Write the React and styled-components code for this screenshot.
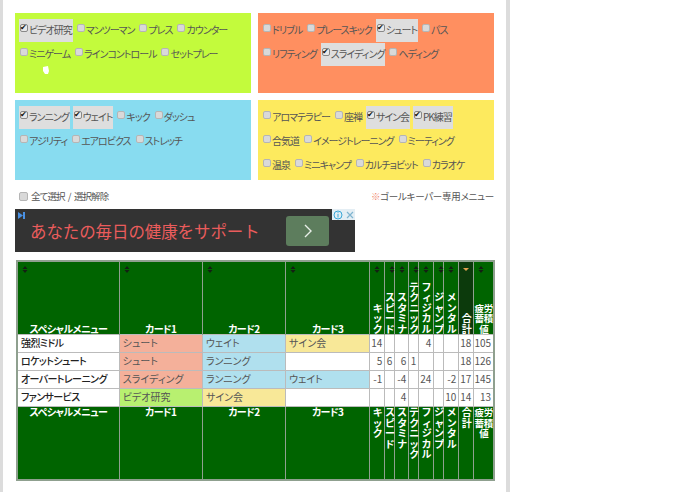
import styled, { createGlobalStyle } from "styled-components";

const GlobalStyle = createGlobalStyle`
  html, body {
    margin: 0;
    background: #fff;
    font-family: "Noto Sans CJK JP", "Liberation Sans", sans-serif;
    font-feature-settings: "palt";
    color: #444;
  }
`;

const Page = styled.div`
  box-sizing: border-box;
  width: 510px;
  height: 492px;
  overflow: hidden;
  position: relative;
  border-left: 3px solid #dcdcdc;
  border-right: 4px solid #dcdcdc;
  padding: 13px 12px 0 12px;
`;

const Panels = styled.div`
  display: grid;
  grid-template-columns: 236px 236px;
  grid-auto-rows: 80px;
  gap: 7px;
`;

const Panel = styled.div`
  background: ${(p) => p.$bg};
  padding: 6px 4px 0;
`;

const ItemRow = styled.div`
  display: flex;
  margin-bottom: 1px;
`;

const Item = styled.label`
  box-sizing: border-box;
  display: flex;
  align-items: center;
  height: 23px;
  margin-right: 3px;
  padding: 0 1px 2px;
  font-size: 10px;
  letter-spacing: -1px;
  color: #555;
  white-space: nowrap;
  background: ${(p) => (p.$on ? "#dedede" : "transparent")};
`;

const Box = styled.input.attrs({ type: "checkbox", readOnly: true })`
  appearance: none;
  box-sizing: border-box;
  width: 8px;
  height: 8px;
  margin: -3px 1px 0 0;
  background: #d9d9d9;
  border: 1px solid #b5b5b5;
  border-radius: 2px;
  position: relative;
  flex: none;

  &:checked {
    background: #e8e8e8;
    border-color: #888;
  }

  &:checked::after {
    content: "✔";
    position: absolute;
    left: -1px;
    top: -3px;
    font-size: 8px;
    line-height: 11px;
    color: #111;
  }
`;

const Cursor = styled.svg`
  position: absolute;
  left: 39px;
  top: 65px;
`;

const Options = styled.div`
  display: flex;
  justify-content: space-between;
  align-items: center;
  height: 16px;
  margin-top: 8px;
  font-size: 9.5px;
  color: #555;
  padding-left: 4px;
`;

const SelectAll = styled.label`
  display: flex;
  align-items: center;
  gap: 2px;
  letter-spacing: -0.9px;
  word-spacing: 2px;

  input {
    width: 9px;
    height: 9px;
    margin: 0 1px 0 0;
  }
`;

const Keeper = styled.span`
  letter-spacing: -0.25px;

  em {
    font-style: normal;
    color: #f08a70;
  }
`;

const Ad = styled.div`
  position: relative;
  display: flex;
  align-items: center;
  justify-content: space-between;
  box-sizing: border-box;
  width: 340px;
  height: 43px;
  margin-top: 5px;
  padding: 0 26px 0 15px;
  background: #333;
`;

const AdText = styled.span`
  font-size: 16.5px;
  color: #ea5c5c;
  font-feature-settings: normal;
  letter-spacing: -0.1px;
`;

const AdButton = styled.div`
  width: 43px;
  height: 30px;
  border-radius: 3px;
  background: #5d7d5d;
  display: flex;
  align-items: center;
  justify-content: center;
`;

const AdMark = styled.svg`
  position: absolute;
  left: 3px;
  top: 3px;
`;

const AdInfo = styled.div`
  position: absolute;
  right: 0;
  top: 0;
  width: 23px;
  height: 11px;
  background: #e4eef4;
  display: flex;
  align-items: center;
  justify-content: space-around;
`;

const Table = styled.table`
  box-sizing: border-box;
  table-layout: fixed;
  border-collapse: collapse;
  width: 479px;
  margin: 8px 0 0 1px;
  border: 2px solid #8fa08f;
  font-size: 10px;
`;

const HeadCell = styled.th`
  position: relative;
  height: 72px;
  padding: 0;
  background: ${(p) => (p.$active ? "#0c3a0c" : "#006400")};
  color: #fff;
  border-left: 1px solid #8fa08f;
  font-weight: 700;
  font-size: ${(p) => (p.$small ? "9.5px" : "10px")};
  letter-spacing: ${(p) => (p.$small ? "-0.4px" : "-0.6px")};
  line-height: 10.5px;
  text-align: center;
  vertical-align: ${(p) => (p.$foot ? "top" : "bottom")};
  word-break: break-all;
`;

const SortIcon = styled.svg`
  position: absolute;
  left: 4px;
  top: 4px;
`;

const Cell = styled.td`
  height: 16px;
  padding: ${(p) => (p.$num ? "0 2px 1px 0" : "0 2px 1px 3px")};
  border: 1px solid #bbb;
  background: ${(p) => p.$bg || "#fff"};
  text-align: ${(p) => (p.$num ? "right" : "left")};
  white-space: nowrap;
  overflow: hidden;
  color: ${(p) => (p.$name ? "#222" : "#555")};
  font-weight: ${(p) => (p.$name ? 500 : 400)};
  letter-spacing: ${(p) => (p.$name ? "-0.6px" : "0")};
  line-height: 12px;
`;

const pink = "#f4b09a";
const blue = "#b0e0ee";
const yellow = "#f8e898";
const green = "#b8f070";

const panels = [
  {
    bg: "#c3fb3c",
    rows: [
      [["ビデオ研究", true], ["マンツーマン"], ["プレス"], ["カウンター"]],
      [["ミニゲーム"], ["ラインコントロール"], ["セットプレー"]],
    ],
  },
  {
    bg: "#ff8f60",
    rows: [
      [["ドリブル"], ["プレースキック"], ["シュート", true], ["パス"]],
      [["リフティング"], ["スライディング", true], ["ヘディング"]],
    ],
  },
  {
    bg: "#88dcf0",
    rows: [
      [["ランニング", true], ["ウェイト", true], ["キック"], ["ダッシュ"]],
      [["アジリティ"], ["エアロビクス"], ["ストレッチ"]],
    ],
  },
  {
    bg: "#fdea5e",
    rows: [
      [["アロマテラピー"], ["座禅"], ["サイン会", true], ["PK練習", true]],
      [["合気道"], ["イメージトレーニング"], ["ミーティング"]],
      [["温泉"], ["ミニキャンプ"], ["カルチョビット"], ["カラオケ"]],
    ],
  },
];

const columns = [
  ["スペシャルメニュー", 102], ["カード1", 83], ["カード2", 83], ["カード3", 84],
  ["キック", 15], ["スピード", 10], ["スタミナ", 14], ["テクニック", 10],
  ["フィジカル", 15], ["ジャンプ", 10], ["メンタル", 15], ["合計", 15], ["疲労蓄積値", 20],
];

const rows = [
  { name: "強烈ミドル", cards: [["シュート", pink], ["ウェイト", blue], ["サイン会", yellow]], nums: [14, "", "", "", 4, "", "", 18, 105] },
  { name: "ロケットシュート", cards: [["シュート", pink], ["ランニング", blue], [""]], nums: [5, 6, 6, 1, "", "", "", 18, 126] },
  { name: "オーバートレーニング", cards: [["スライディング", pink], ["ランニング", blue], ["ウェイト", blue]], nums: [-1, "", -4, "", 24, "", -2, 17, 145] },
  { name: "ファンサービス", cards: [["ビデオ研究", green], ["サイン会", yellow], [""]], nums: ["", "", 4, "", "", "", 10, 14, 13] },
];

function Sort({ active }) {
  return (
    <SortIcon width="6" height="7" viewBox="0 0 6 7">
      {active ? (
        <path d="M0 2h6L3 5z" fill="#e0a050" />
      ) : (
        <path d="M3 0l2.5 3h-5zM3 7L.5 4h5z" fill="#142014" />
      )}
    </SortIcon>
  );
}

export default function App() {
  return (
    <Page>
      <GlobalStyle />
      <Panels>
        {panels.map((panel) => (
          <Panel key={panel.bg} $bg={panel.bg}>
            {panel.rows.map((items, r) => (
              <ItemRow key={r}>
                {items.map(([label, on]) => (
                  <Item key={label} $on={on}>
                    <Box defaultChecked={on} />
                    {label}
                  </Item>
                ))}
              </ItemRow>
            ))}
          </Panel>
        ))}
      </Panels>
      <Cursor width="8" height="10" viewBox="0 0 8 10">
        <path d="M1 2l5-1 1 5-1 3H3L1 6z" fill="#fff" />
      </Cursor>
      <Options>
        <SelectAll>
          <Box />
          全て選択 / 選択解除
        </SelectAll>
        <Keeper>
          <em>※</em>ゴールキーパー専用メニュー
        </Keeper>
      </Options>
      <Ad>
        <AdMark width="7" height="7" viewBox="0 0 7 7">
          <path d="M0 0l5 3.5L0 7z" fill="#4a90e2" />
          <path d="M5 0h2v7H5z" fill="#4a90e2" />
        </AdMark>
        <AdText>あなたの毎日の健康をサポート</AdText>
        <AdButton>
          <svg width="10" height="14" viewBox="0 0 10 14">
            <path d="M2 1l6 6-6 6" fill="none" stroke="#e8efe8" strokeWidth="1.4" />
          </svg>
        </AdButton>
        <AdInfo>
          <svg width="10" height="10" viewBox="0 0 10 10">
            <circle cx="5" cy="5" r="4" fill="none" stroke="#39a7d8" />
            <path d="M5 4v3.5M5 2.2v1" stroke="#39a7d8" />
          </svg>
          <svg width="8" height="8" viewBox="0 0 8 8">
            <path d="M1 1l6 6M7 1L1 7" stroke="#7fb4d0" strokeWidth="1.2" />
          </svg>
        </AdInfo>
      </Ad>
      <Table>
        <colgroup>
          {columns.map(([label, width]) => (
            <col key={label} style={{ width }} />
          ))}
        </colgroup>
        <thead>
          <tr>
            {columns.map(([label], i) => (
              <HeadCell key={label} $active={i === 11} $small={i === 12}>
                <Sort active={i === 11} />
                {label}
              </HeadCell>
            ))}
          </tr>
        </thead>
        <tbody>
          {rows.map((row) => (
            <tr key={row.name}>
              <Cell $name>{row.name}</Cell>
              {row.cards.map(([card, bg], i) => (
                <Cell key={i} $bg={bg}>{card}</Cell>
              ))}
              {row.nums.map((n, i) => (
                <Cell key={i} $num>{n}</Cell>
              ))}
            </tr>
          ))}
        </tbody>
        <tfoot>
          <tr>
            {columns.map(([label], i) => (
              <HeadCell key={label} $foot $small={i === 12}>{label}</HeadCell>
            ))}
          </tr>
        </tfoot>
      </Table>
    </Page>
  );
}
